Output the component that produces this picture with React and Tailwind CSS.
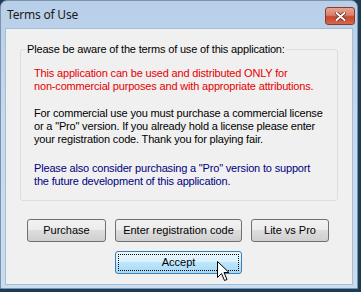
import React from "react";

const font = { fontFamily: '"Liberation Sans", Arial, sans-serif' };

function Btn({ children, w, hot }) {
  return (
    <button
      className={
        "relative h-[23px] rounded-[3px] border text-[11px] text-black leading-none flex items-center justify-center " +
        (hot
          ? "border-[#3c7fb1] bg-[linear-gradient(to_bottom,#eaf6fd_0%,#d9f0fc_50%,#bee6fd_50%,#a7d9f5_100%)]"
          : "border-[#707070] bg-[linear-gradient(to_bottom,#f2f2f2_0%,#ebebeb_50%,#dddddd_50%,#cfcfcf_100%)]")
      }
      style={{ width: w }}
    >
      {hot && (
        <span className="absolute inset-[2px] border border-dotted border-black pointer-events-none" />
      )}
      <span className="relative">{children}</span>
    </button>
  );
}

export default function App() {
  return (
    <div className="w-[361px] h-[292px] bg-[#1d3b52] overflow-hidden" style={font}>
      <div className="w-[358px] h-[289px] rounded-t-[7px] border border-[#7a93ab] bg-[linear-gradient(to_bottom,#b7cfe8,#c6d9ee_40%,#c9dcf0)] flex flex-col">
        <div className="h-[27px] flex items-start justify-between pl-[6px] pr-[2px] shrink-0">
          <span
            className="text-[12px] leading-none mt-[8px] tracking-[-0.2px] text-[#1a1a1a]"
            style={{ fontFamily: '"Noto Sans", "Open Sans", sans-serif' }}
          >
            Terms of Use
          </span>
          <div className="w-[30px] h-[18px] mt-[6px] rounded-[3px] border border-[#8a3a2e] bg-[linear-gradient(to_bottom,#e8a393_0%,#d9806c_45%,#c7462b_55%,#d5684c_100%)] flex items-center justify-center">
            <svg width="11" height="9" viewBox="0 0 11 9">
              <path
                d="M1.5 1 L9.5 8 M9.5 1 L1.5 8"
                stroke="#5a1a10"
                strokeWidth="3.4"
                strokeLinecap="round"
              />
              <path
                d="M1.5 1 L9.5 8 M9.5 1 L1.5 8"
                stroke="#ffffff"
                strokeWidth="2"
                strokeLinecap="round"
              />
            </svg>
          </div>
        </div>
        <div className="flex-1 mx-[4px] mb-[3px] bg-[#f0f0f0] border border-[#a6bdd6] relative flex flex-col">
          <fieldset className="mt-[14px] ml-[14px] w-[318px] border border-[#d5dfe5] rounded-[3px] pl-[5px] pb-[12px] tracking-[-0.17px]">
            <legend className="px-[1px] text-[11px] leading-[13px] text-black">
              Please be aware of the terms of use of this application:
            </legend>
            <div className="pl-[8px] pt-[11px] text-[11px] leading-[13px] flex flex-col">
              <p className="text-[#e60000]">
                This application can be used and distributed ONLY for
                <br />
                non-commercial purposes and with appropriate attributions.
              </p>
              <p className="text-black mt-[14px]">
                For commercial use you must purchase a commercial license
                <br />
                or a "Pro" version. If you already hold a license please enter
                <br />
                your registration code. Thank you for playing fair.
              </p>
              <p className="text-[#000080] mt-[16px]">
                Please also consider purchasing a "Pro" version to support
                <br />
                the future development of this application.
              </p>
            </div>
          </fieldset>
          <div className="flex gap-[9px] ml-[21px] mt-[18px]">
            <Btn w={79}>Purchase</Btn>
            <Btn w={127}>Enter registration code</Btn>
            <Btn w={78}>Lite vs Pro</Btn>
          </div>
          <div className="flex ml-[109px] mt-[9px]">
            <Btn w={127} hot>
              Accept
            </Btn>
          </div>
          <svg
            className="absolute left-[211px] top-[232px]"
            width="13"
            height="21"
            viewBox="0 0 13 21"
          >
            <path
              d="M0.5 0.5 L0.5 16.5 L4.5 12.5 L7.5 19.5 L10 18.5 L7 11.5 L12 11.5 Z"
              fill="#ffffff"
              stroke="#000000"
              strokeWidth="1"
            />
          </svg>
        </div>
      </div>
    </div>
  );
}
